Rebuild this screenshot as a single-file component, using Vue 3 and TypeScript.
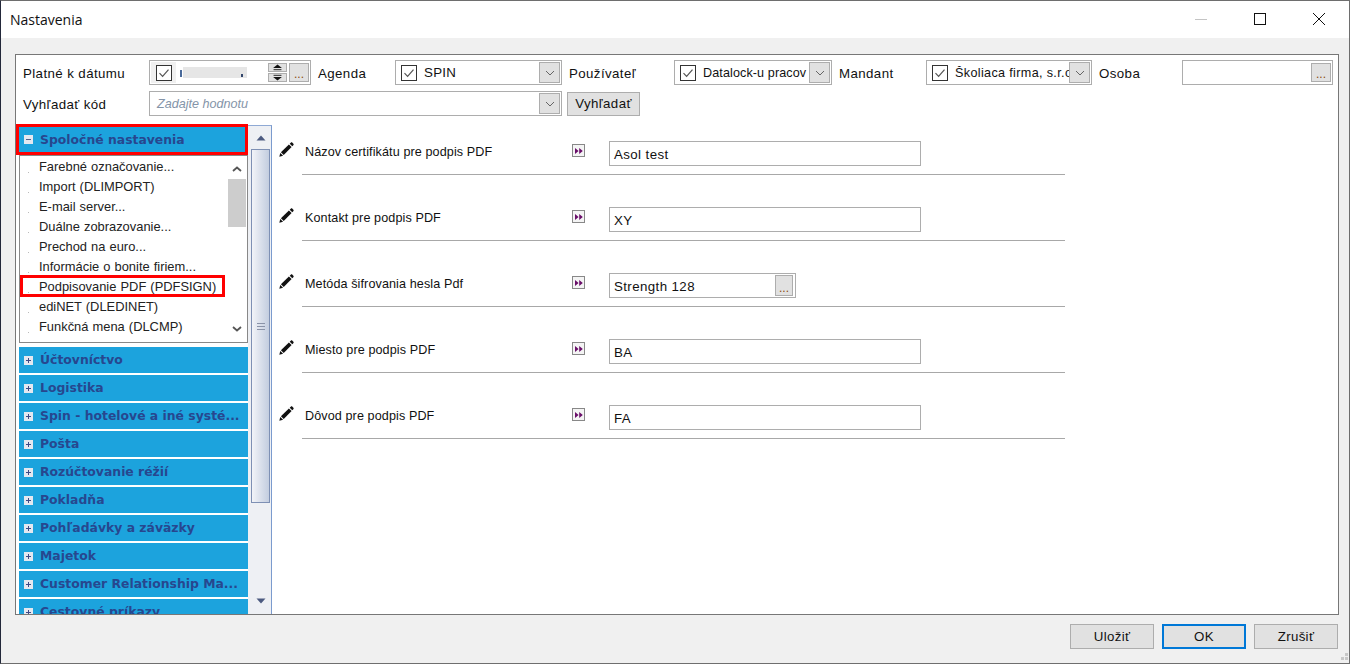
<script setup lang="ts">
const groups: string[] = [
  'Účtovníctvo',
  'Logistika',
  'Spin - hotelové a iné systé...',
  'Pošta',
  'Rozúčtovanie réžií',
  'Pokladňa',
  'Pohľadávky a záväzky',
  'Majetok',
  'Customer Relationship Ma...',
  'Cestovné príkazy',
]

const items: { label: string; selected?: boolean }[] = [
  { label: 'Farebné označovanie...' },
  { label: 'Import (DLIMPORT)' },
  { label: 'E-mail server...' },
  { label: 'Duálne zobrazovanie...' },
  { label: 'Prechod na euro...' },
  { label: 'Informácie o bonite firiem...' },
  { label: 'Podpisovanie PDF (PDFSIGN)', selected: true },
  { label: 'ediNET (DLEDINET)' },
  { label: 'Funkčná mena (DLCMP)' },
  { label: 'Medzinárodné účtovníctvo' },
]

const rows: { label: string; value: string; lookup?: boolean }[] = [
  { label: 'Názov certifikátu pre podpis PDF', value: 'Asol test' },
  { label: 'Kontakt pre podpis PDF', value: 'XY' },
  { label: 'Metóda šifrovania hesla Pdf', value: 'Strength 128', lookup: true },
  { label: 'Miesto pre podpis PDF', value: 'BA' },
  { label: 'Dôvod pre podpis PDF', value: 'FA' },
]
</script>

<template>
  <div class="window">
    <header class="titlebar">
      <span class="title">Nastavenia</span>
      <div class="controls">
        <svg class="ctl" viewBox="0 0 12 12" width="12" height="12"><path d="M0 6.5h12" stroke="#c4c4c4" fill="none" /></svg>
        <svg class="ctl" viewBox="0 0 12 12" width="12" height="12"><rect x="0.5" y="0.5" width="11" height="11" stroke="#111" fill="none" /></svg>
        <svg class="ctl" viewBox="0 0 12 12" width="12" height="12"><path d="M0 0L12 12M12 0L0 12" stroke="#111" fill="none" /></svg>
      </div>
    </header>

    <main class="content">
      <section class="panel">
        <div class="filters">
          <div class="filter-row">
            <label class="flabel w-date">Platné k dátumu</label>
            <div class="field date">
              <span class="checkcell">
                <svg class="check" viewBox="0 0 16 16" width="16" height="16"><rect x="0.5" y="0.5" width="15" height="15" fill="#fff" stroke="#333" /><path d="M3.5 8.2L6.6 11.4L12.5 4.6" fill="none" stroke="#555" stroke-width="1.2" /></svg>
              </span>
              <span class="redacted-wrap">
                <span class="frag"></span>
                <span class="redacted"><span class="comma"></span></span>
              </span>
              <span class="spin">
                <span class="spin-part">
                  <svg viewBox="0 0 19 8" width="19" height="7"><path d="M4.5 4.5L9.5 0.5L14.5 4.5Z" fill="#111" /><path d="M5 6.5h9" stroke="#111" /></svg>
                </span>
                <span class="spin-part">
                  <svg viewBox="0 0 19 8" width="19" height="7"><path d="M5 1.5h9" stroke="#111" /><path d="M4.5 3.5L9.5 7.5L14.5 3.5Z" fill="#111" /></svg>
                </span>
              </span>
              <span class="dots-btn">...</span>
            </div>
            <label class="flabel w-agenda">Agenda</label>
            <div class="field combo w-c1">
              <svg class="check" viewBox="0 0 16 16" width="16" height="16"><rect x="0.5" y="0.5" width="15" height="15" fill="#fff" stroke="#333" /><path d="M3.5 8.2L6.6 11.4L12.5 4.6" fill="none" stroke="#555" stroke-width="1.2" /></svg>
              <span class="ftext">SPIN</span>
              <span class="drop"><svg viewBox="0 0 10 6" width="10" height="6"><path d="M1 1L5 5L9 1" fill="none" stroke="#666" /></svg></span>
            </div>
            <label class="flabel w-user">Používateľ</label>
            <div class="field combo w-c2">
              <svg class="check" viewBox="0 0 16 16" width="16" height="16"><rect x="0.5" y="0.5" width="15" height="15" fill="#fff" stroke="#333" /><path d="M3.5 8.2L6.6 11.4L12.5 4.6" fill="none" stroke="#555" stroke-width="1.2" /></svg>
              <span class="ftext small">Datalock-u pracov</span>
              <span class="drop"><svg viewBox="0 0 10 6" width="10" height="6"><path d="M1 1L5 5L9 1" fill="none" stroke="#666" /></svg></span>
            </div>
            <label class="flabel w-mandant">Mandant</label>
            <div class="field combo w-c3">
              <svg class="check" viewBox="0 0 16 16" width="16" height="16"><rect x="0.5" y="0.5" width="15" height="15" fill="#fff" stroke="#333" /><path d="M3.5 8.2L6.6 11.4L12.5 4.6" fill="none" stroke="#555" stroke-width="1.2" /></svg>
              <span class="ftext small wide">Školiaca firma, s.r.o.</span>
              <span class="drop"><svg viewBox="0 0 10 6" width="10" height="6"><path d="M1 1L5 5L9 1" fill="none" stroke="#666" /></svg></span>
            </div>
            <label class="flabel w-osoba">Osoba</label>
            <div class="field lookup w-c4">
              <span class="dots-btn">...</span>
            </div>
          </div>
          <div class="filter-row">
            <label class="flabel w-date">Vyhľadať kód</label>
            <div class="field combo w-search">
              <span class="placeholder">Zadajte hodnotu</span>
              <span class="drop"><svg viewBox="0 0 10 6" width="10" height="6"><path d="M1 1L5 5L9 1" fill="none" stroke="#666" /></svg></span>
            </div>
            <button class="search-btn" type="button">Vyhľadať</button>
          </div>
        </div>

        <div class="body">
          <aside class="sidebar">
            <div class="accordion">
              <div class="group-head active">
                <svg class="tree" viewBox="0 0 9 9" width="9" height="9"><rect x="0" y="0" width="9" height="9" fill="#e4e8f0" /><path d="M2 4.5h5" stroke="#555f8a" /></svg>
                <span>Spoločné nastavenia</span>
              </div>
              <div class="sublist">
                <ul class="sublist-items">
                  <li v-for="it in items" :key="it.label" class="subitem" :class="{ selected: it.selected }">
                    <span class="tick"></span>
                    <span>{{ it.label }}</span>
                  </li>
                </ul>
                <div class="inner-scroll">
                  <svg viewBox="0 0 18 8" width="18" height="8" class="chev-up"><path d="M5 6L9 2.5L13 6" fill="none" stroke="#555" stroke-width="1.8" /></svg>
                  <span class="inner-thumb"></span>
                  <span class="grow"></span>
                  <svg viewBox="0 0 18 8" width="18" height="8" class="chev-down"><path d="M5 2L9 5.5L13 2" fill="none" stroke="#555" stroke-width="1.8" /></svg>
                </div>
              </div>
              <div v-for="g in groups" :key="g" class="group-head">
                <svg class="tree" viewBox="0 0 9 9" width="9" height="9"><rect x="0" y="0" width="9" height="9" fill="#e4e8f0" /><path d="M2 4.5h5M4.5 2v5" stroke="#3f4a86" /></svg>
                <span class="group-text">{{ g }}</span>
              </div>
            </div>
            <div class="outer-scroll">
              <span class="arrow-box"><svg viewBox="0 0 10 6" width="10" height="6"><path d="M0.5 5.5L5 0.5L9.5 5.5Z" fill="#4c5a80" /></svg></span>
              <span class="outer-thumb"><span class="grip"></span></span>
              <span class="grow"></span>
              <span class="arrow-box bottom"><svg viewBox="0 0 10 6" width="10" height="6"><path d="M0.5 0.5L5 5.5L9.5 0.5Z" fill="#4c5a80" /></svg></span>
            </div>
          </aside>

          <div class="settings">
            <div v-for="r in rows" :key="r.label" class="setting">
              <svg class="pencil" viewBox="0 0 15 15" width="15" height="15">
                <path d="M0.3 14.7L1.3 10.9L4.1 13.7Z" fill="#111" />
                <path d="M1.9 10.3L9.9 2.4L12.6 5.1L4.7 13.1Z" fill="#111" />
                <path d="M10.7 1.7L12 0.5C12.4 0.2 12.8 0.2 13.2 0.6L14.4 1.8C14.8 2.2 14.8 2.6 14.5 3L13.3 4.3Z" fill="#111" />
              </svg>
              <div class="setting-body">
                <span class="setting-label">{{ r.label }}</span>
                <span class="arrow-btn">
                  <svg viewBox="0 0 10 10" width="10" height="10"><path d="M1 2L4.6 5L1 8ZM5.2 2L8.8 5L5.2 8Z" fill="#6a0f6a" /></svg>
                </span>
                <div class="value" :class="{ 'has-lookup': r.lookup }">
                  <span class="value-text">{{ r.value }}</span>
                  <span v-if="r.lookup" class="dots-btn big">...</span>
                </div>
              </div>
            </div>
          </div>
        </div>
      </section>
    </main>

    <footer class="footer">
      <button class="action" type="button">Uložiť</button>
      <button class="action primary" type="button">OK</button>
      <button class="action" type="button">Zrušiť</button>
    </footer>
    <svg class="resize-grip" viewBox="0 0 12 12" width="12" height="12">
      <path d="M8 2h3v3H8zM4 6h3v3H4zM8 6h3v3H8z" fill="#c8c8c8" />
    </svg>
  </div>
</template>

<style>
html, body { margin: 0; padding: 0; background: #f0f0f0; }
</style>

<style scoped>
* { box-sizing: border-box; }
.window {
  width: 1350px; height: 664px; display: flex; flex-direction: column; position: relative;
  background: #f0f0f0; border-top: 1px solid #6e6e6e; border-left: 1px solid #23283a; border-right: 1px solid #6e6e6e; border-bottom: 1px solid #6e6e6e;
  font-family: "Liberation Sans", Arial, sans-serif; color: #111; font-size: 13.3px; overflow: hidden;
}
.titlebar { height: 37px; background: #fff; display: flex; align-items: center; justify-content: space-between; flex: none; }
.title { margin-left: 9px; font-family: "Open Sans", sans-serif; font-size: 14px; margin-top: -1px; }
.controls { display: flex; gap: 47px; margin-right: 24px; margin-top: -1px; }
.content { flex: 1; min-height: 0; padding: 16px 10px 0 14px; display: flex; }
.panel { flex: 1; background: #fff; border: 1px solid #777; display: flex; flex-direction: column; min-width: 0; }
.filters { padding: 5px 0 0 7px; display: flex; flex-direction: column; gap: 6px; flex: none; }
.filter-row { display: flex; align-items: center; height: 25px; }
.flabel { white-space: nowrap; flex: none; letter-spacing: .4px; padding-top: 2px; }
.w-date { width: 126px; }
.w-agenda { width: 77px; margin-left: 7px; }
.w-user { width: 105px; margin-left: 7px; }
.w-mandant { width: 87px; margin-left: 7px; }
.w-osoba { width: 83px; margin-left: 7px; }
.field { height: 25px; border: 1px solid #adadad; background: #fff; display: flex; align-items: center; flex: none; position: relative; }
.date { width: 162px; }
.checkcell { width: 25px; height: 21px; background: #f0f0f0; margin-left: 1px; display: flex; align-items: center; justify-content: center; }
.redacted-wrap { flex: 1; padding-left: 4px; display: flex; align-items: center; }
.frag { width: 2px; height: 7px; background: #4a6a9a; margin: 2px 1px 0 0; }
.redacted { display: block; width: 64px; height: 11px; background: #e6e6e6; }
.comma { display: block; width: 2px; height: 3px; margin: 7px 0 0 58px; background: #33466b; }
.spin { width: 19px; height: 19px; display: flex; flex-direction: column; gap: 1px; margin-right: 2px; }
.spin-part { height: 9px; background: #e1e1e1; border: 1px solid #adadad; display: flex; align-items: center; justify-content: center; overflow: hidden; }
.dots-btn {
  width: 20px; height: 19px; background: #e1e1e1; border: 1px solid #adadad; color: #8a4b10;
  display: flex; align-items: flex-end; justify-content: center; font-size: 12px; line-height: 14px; margin-right: 1px; flex: none;
}
.combo .check { margin-left: 5px; flex: none; }
.w-c1 { width: 167px; }
.w-c2 { width: 158px; }
.w-c3 { width: 166px; }
.w-c4 { width: 151px; justify-content: flex-end; }
.w-search { width: 413px; }
.ftext { flex: 1; margin-left: 7px; white-space: nowrap; overflow: hidden; letter-spacing: .3px; }
.ftext.small { font-size: 12.6px; margin-left: 7px; letter-spacing: .1px; }
.ftext.small.wide { letter-spacing: .35px; }
.drop {
  width: 21px; height: 21px; background: #e1e1e1; border: 1px solid #adadad; margin-right: 1px; flex: none;
  display: flex; align-items: center; justify-content: center;
}
.placeholder { flex: 1; margin-left: 7px; font-style: italic; color: #8494a8; font-size: 12.6px; }
.search-btn {
  width: 73px; height: 24px; margin-left: 5px; background: #e1e1e1; border: 1px solid #adadad; padding: 0;
  font-family: inherit; font-size: 13.3px; color: #111; letter-spacing: .4px;
}
.body { flex: 1; min-height: 0; display: flex; margin-top: 8px; }
.sidebar { width: 256px; flex: none; display: flex; overflow: hidden; }
.accordion { width: 232px; flex: none; display: flex; flex-direction: column; gap: 2px; overflow: hidden; }
.group-head {
  height: 26px; flex: none; margin-left: 3px; background: #1ca3dd; color: #27478f; display: flex; align-items: center;
  gap: 7px; padding-left: 5px; font-family: "DejaVu Sans", sans-serif; font-weight: 700; font-size: 12.4px; white-space: nowrap;
}
.group-text { margin-top: -2px; }
.group-head.active { height: 31px; margin-left: 0; padding-left: 5px; border: 3px solid #f00; }
.sublist {
  height: 188px; flex: none; margin: -2px 0 2px 3px; border: 1px solid #888; display: flex; overflow: hidden; background: #fff;
}
.sublist-items { list-style: none; margin: 0; padding: 0; width: 208px; flex: none; }
.subitem {
  height: 20px; display: flex; align-items: center; margin: 0 4px 0 1px; white-space: nowrap;
  font-size: 12.9px; word-spacing: .5px; color: #222;
}
.subitem.selected { outline: 3px solid #f00; outline-offset: -2px; }
.tick { width: 1px; height: 1px; background: #bbb; margin-left: 7px; margin-right: 10px; align-self: flex-end; margin-bottom: 3px; }
.inner-scroll { width: 18px; flex: none; display: flex; flex-direction: column; padding-top: 9px; padding-bottom: 9px; }
.inner-thumb { height: 48px; background: #cdcdcd; margin-top: 6px; }
.grow { flex: 1; }
.outer-scroll { width: 24px; flex: none; background: #eef0f4; border-right: 1px solid #7b9bce; border-top: 1px solid #8fa9d4; margin-top: 1px; display: flex; flex-direction: column; padding: 0 1px 0 3px; }
.arrow-box { height: 23px; display: flex; align-items: center; justify-content: center; flex: none; }
.arrow-box.bottom { height: 24px; padding-bottom: 3px; }
.outer-thumb {
  height: 354px; flex: none; border: 1px solid #7e90b4;
  background: linear-gradient(to right, #f2f4f8 0%, #dfe4ee 40%, #c3cddf 100%);
  display: flex; align-items: center; justify-content: center;
}
.grip { width: 8px; height: 7px; background: repeating-linear-gradient(to bottom, #8a93a8 0 1px, transparent 1px 3px); }
.settings { flex: 1; padding: 17px 0 0 7px; display: flex; flex-direction: column; gap: 32px; background: #fff; }
.setting { display: flex; height: 34px; }
.pencil { flex: none; margin-top: 1px; margin-right: 8px; }
.setting-body { width: 763px; display: flex; border-bottom: 1px solid #a8a8a8; padding-left: 3px; align-items: flex-start; }
.setting-label { width: 267px; flex: none; font-size: 12.6px; line-height: 20px; color: #111; padding-top: 1px; letter-spacing: .1px; }
.arrow-btn { width: 13px; height: 13px; flex: none; margin-top: 3px; margin-right: 24px; border: 1px solid #888; background: #f4f4f4; display: flex; align-items: center; justify-content: center; }
.value { width: 312px; height: 25px; flex: none; border: 1px solid #adadad; background: #fff; display: flex; align-items: center; padding-left: 4px; justify-content: space-between; }
.value-text { letter-spacing: .4px; padding-top: 1px; }
.value.has-lookup { width: 187px; }
.dots-btn.big { width: 18px; height: 21px; margin-right: 2px; }
.footer { height: 48px; flex: none; display: flex; justify-content: flex-end; gap: 8px; padding: 9px 11px 0 0; }
.action { width: 84px; height: 25px; background: #e1e1e1; border: 1px solid #adadad; padding: 0; font-family: inherit; font-size: 13.3px; color: #111; letter-spacing: .3px; }
.action.primary { border: 2px solid #0078d7; }
.resize-grip { position: absolute; right: 0; bottom: 0; }
</style>
